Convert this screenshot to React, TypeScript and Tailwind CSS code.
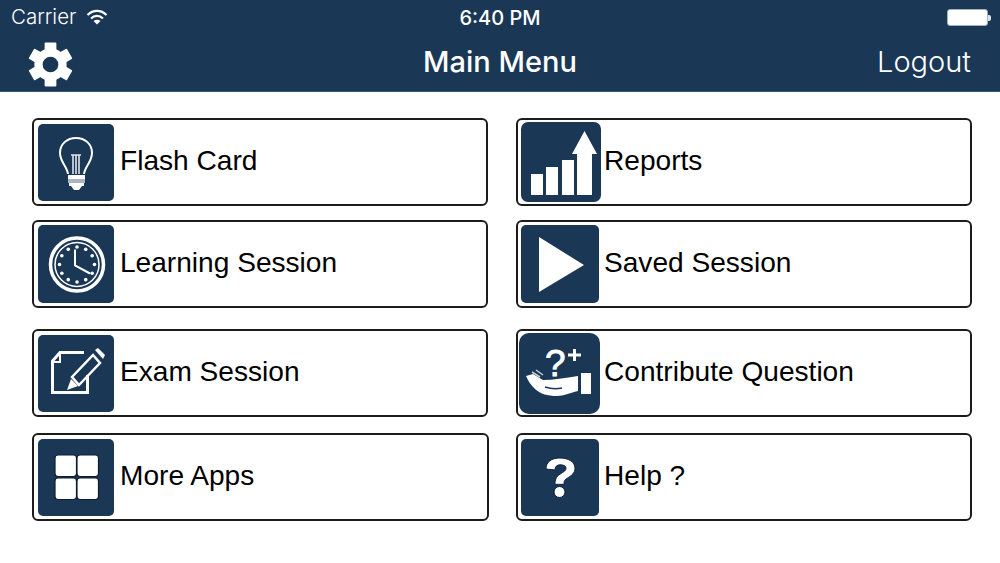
import type { ReactNode } from 'react';

const sans = 'font-["Liberation_Sans",Arial,sans-serif]';

function GearIcon() {
  return (
    <svg viewBox="0 0 46 46" className="w-[45px] h-[45px]">
      {[0, 60, 120, 180, 240, 300].map((a) => (
        <rect key={a} x="17" y="0.5" width="12" height="10" rx="1" fill="#fff" transform={`rotate(${a} 23 23)`} />
      ))}
      <circle cx="23" cy="23" r="16.5" fill="#fff" />
      <circle cx="23" cy="23" r="8" fill="#1a3755" />
    </svg>
  );
}

function BulbIcon() {
  return (
    <svg viewBox="0 0 76 77" className="w-full h-full">
      <path d="M30 50 C29 42 22 38 22 29 C22 20 29 14 38 14 C47 14 54 20 54 29 C54 38 47 42 46 50" fill="none" stroke="#fff" strokeWidth="2" />
      <path d="M35 50 V31 M38 50 V31 M41 50 V31 M33 31 H43" stroke="#dfe5ea" strokeWidth="1.6" fill="none" />
      <rect x="30" y="51" width="17" height="4" fill="#fff" />
      <rect x="30" y="55" width="17" height="4" fill="#a9b6c2" />
      <rect x="31" y="59" width="15" height="3" fill="#fff" />
      <path d="M33 62 H44 L41 66 H36 Z" fill="#fff" />
    </svg>
  );
}

function ClockIcon() {
  const ticks = [0, 30, 60, 90, 120, 150, 180, 210, 240, 270, 300, 330];
  return (
    <svg viewBox="0 0 76 77" className="w-full h-full">
      <circle cx="39" cy="39" r="26.5" fill="none" stroke="#fff" strokeWidth="3.5" />
      <circle cx="39" cy="39" r="22" fill="none" stroke="#fff" strokeWidth="1.5" />
      {ticks.map((a) => (
        <circle
          key={a}
          cx={39 + 17.5 * Math.sin((a * Math.PI) / 180)}
          cy={39 - 17.5 * Math.cos((a * Math.PI) / 180)}
          r="1.8"
          fill="#fff"
        />
      ))}
      <path d="M37 24 V40 L52 48" fill="none" stroke="#fff" strokeWidth="2" />
    </svg>
  );
}

function ExamIcon() {
  return (
    <svg viewBox="0 0 76 77" className="w-full h-full">
      <path d="M46 17.5 H22 L14.5 26 V57.5 H49.5 V40" fill="none" stroke="#fff" strokeWidth="3" />
      <path d="M22 17.5 V27 H14.5" fill="none" stroke="#fff" strokeWidth="2" />
      <path d="M57 15 L60 13 L67 20 L65 24 Z" fill="#fff" />
      <path d="M55 20 L62 28 L41 50 L34 42 Z" fill="none" stroke="#fff" strokeWidth="2.5" />
      <path d="M33 44 L40 51 L29 55 Z" fill="#fff" />
    </svg>
  );
}

function AppsIcon() {
  return (
    <svg viewBox="0 0 76 77" className="w-full h-full">
      <rect x="17" y="16" width="21.5" height="21.5" rx="3" fill="#fff" stroke="#0b1c33" strokeWidth="1.2" />
      <rect x="39" y="16" width="21.5" height="21.5" rx="3" fill="#fff" stroke="#0b1c33" strokeWidth="1.2" />
      <rect x="17" y="39" width="21.5" height="21.5" rx="3" fill="#fff" stroke="#0b1c33" strokeWidth="1.2" />
      <rect x="39" y="39" width="21.5" height="21.5" rx="3" fill="#fff" stroke="#0b1c33" strokeWidth="1.2" />
    </svg>
  );
}

function ReportsIcon() {
  return (
    <svg viewBox="0 0 80 80" className="w-full h-full">
      <rect x="10" y="52" width="12" height="21" fill="#fff" />
      <rect x="25" y="45" width="12" height="28" fill="#fff" />
      <rect x="41" y="38" width="12" height="35" fill="#fff" />
      <path d="M56 73 V32 H51 L63.5 9 L76 32 H71 V73 Z" fill="#fff" />
    </svg>
  );
}

function PlayIcon() {
  return (
    <svg viewBox="0 0 78 78" className="w-full h-full">
      <path d="M18 12 L63 40 L18 67 Z" fill="#fff" />
    </svg>
  );
}

function ContributeIcon() {
  return (
    <svg viewBox="0 0 81 81" className="w-full h-full">
      <text x="26" y="43" fill="#fff" stroke="#fff" strokeWidth="0.8" fontSize="37" fontFamily="Liberation Sans, Arial, sans-serif">?</text>
      <path d="M49 22 H62 M55.5 16 V28" stroke="#fff" strokeWidth="3" />
      <path d="M7 43 L14 41 L24 47 C34 47 46 45 59 43 V58 C50 60 45 63 38 63 C28 63 22 61 16 56 C12 52 9 48 7 43 Z" fill="#fff" />
      <path d="M26 54 C32 56 38 56 43 55" fill="none" stroke="#1a3755" strokeWidth="1.5" />
      <path d="M13 39 L21 44 M17 37 L24 42" stroke="#c6d0d9" strokeWidth="1.5" />
      <rect x="62" y="40" width="10" height="21" fill="#fff" />
    </svg>
  );
}

function HelpIcon() {
  return (
    <svg viewBox="0 0 78 77" className="w-full h-full">
      <path transform="translate(0 3.7) scale(1 0.85)" d="M25 31 C25 22 31 18 39 18 C48 18 54 23 54 30 C54 36 50 39 46 42 C43 44 43 46 43 49 H34 C34 44 35 40 39 37 C43 34 45 33 45 30 C45 27 42 26 39 26 C36 26 34 28 34 32 Z" fill="#fff" stroke="#0b1c33" strokeWidth="1" />
      <circle cx="38.5" cy="53" r="5.5" fill="#fff" stroke="#0b1c33" strokeWidth="1" />
    </svg>
  );
}

function MenuItem({ label, icon, tile, pad, extra }: { label: string; icon: ReactNode; tile: string; pad: string; extra?: string }) {
  return (
    <div className={`flex items-center h-[88px] border-2 border-[#1c1c1c] rounded-[6px] bg-white ${pad} ${extra ?? ''}`}>
      <div className={`shrink-0 bg-[#1a3755] ${tile}`}>{icon}</div>
      <span className={`text-[28.1px] leading-none text-black mb-[2px] ${sans}`}>{label}</span>
    </div>
  );
}

export default function App() {
  return (
    <div className="w-[1000px] h-[563px] bg-white overflow-hidden">
      <header className="h-[92px] bg-[#1a3755] text-white border-b border-[#3d5673]">
        <div className="h-[38px] pl-[11px] pr-[9px] pb-[3px] grid grid-cols-3 items-center font-['Inter',sans-serif] text-[20px]">
          <div className="flex items-center gap-[10px] font-light">
            <span className="text-[20.5px]">Carrier</span>
            <svg viewBox="0 0 22 16" className="w-[22px] h-[16px] -mt-[2px]">
              <path d="M1.5 6 C7 0.5 15 0.5 20.5 6" fill="none" stroke="#fff" strokeWidth="2.2" />
              <path d="M5 9.5 C8.5 6 13.5 6 17 9.5" fill="none" stroke="#fff" strokeWidth="2.2" />
              <path d="M11 15.5 L7.5 12 C9.5 10.2 12.5 10.2 14.5 12 Z" fill="#fff" />
            </svg>
          </div>
          <div className="text-center font-medium pr-[2px]">6:40 PM</div>
          <div className="flex justify-end items-center">
            <div className="w-[41px] h-[17px] border border-[#9fb0c0] rounded-[3px] bg-white" />
            <div className="w-[3px] h-[6px] bg-[#dfe5ea] rounded-r-[2px]" />
          </div>
        </div>
        <div className="h-[53px] pl-[28px] pr-[29px] grid grid-cols-3 items-center font-['Inter',sans-serif]">
          <div className="-mt-[1px]">
            <GearIcon />
          </div>
          <div className="text-center text-[29px] font-medium -mt-[6px] pl-[1px]">Main Menu</div>
          <div className="text-right text-[29px] font-light -mt-[6px]">Logout</div>
        </div>
      </header>

      <main className="pl-[32px] pr-[28px] pt-[26px] flex flex-col">
        <div className="grid grid-cols-2 gap-x-[28px]">
          <MenuItem label="Flash Card" icon={<BulbIcon />} tile="w-[76px] h-[77px] rounded-[5px] mr-[6px]" pad="pl-[4px]" />
          <MenuItem label="Reports" icon={<ReportsIcon />} tile="w-[80px] h-[80px] rounded-[7px] mr-[3px]" pad="pl-[3px]" />
        </div>
        <div className="grid grid-cols-2 gap-x-[28px] mt-[14px]">
          <MenuItem label="Learning Session" icon={<ClockIcon />} tile="w-[76px] h-[78px] rounded-[5px] mr-[6px]" pad="pl-[4px]" />
          <MenuItem label="Saved Session" icon={<PlayIcon />} tile="w-[78px] h-[78px] rounded-[5px] mr-[5px]" pad="pl-[3px]" />
        </div>
        <div className="grid grid-cols-2 gap-x-[28px] mt-[21px]">
          <MenuItem label="Exam Session" icon={<ExamIcon />} tile="w-[76px] h-[77px] rounded-[5px] mr-[6px]" pad="pl-[4px]" />
          <MenuItem label="Contribute Question" icon={<ContributeIcon />} tile="w-[81px] h-[81px] rounded-[10px] mr-[4px]" pad="pl-[1px]" />
        </div>
        <div className="grid grid-cols-2 gap-x-[28px] mt-[16px]">
          <MenuItem label="More Apps" icon={<AppsIcon />} tile="w-[76px] h-[77px] rounded-[5px] mr-[6px]" pad="pl-[4px]" extra="-mr-[1px]" />
          <MenuItem label="Help ?" icon={<HelpIcon />} tile="w-[78px] h-[77px] rounded-[5px] mr-[5px]" pad="pl-[3px]" />
        </div>
      </main>
    </div>
  );
}
